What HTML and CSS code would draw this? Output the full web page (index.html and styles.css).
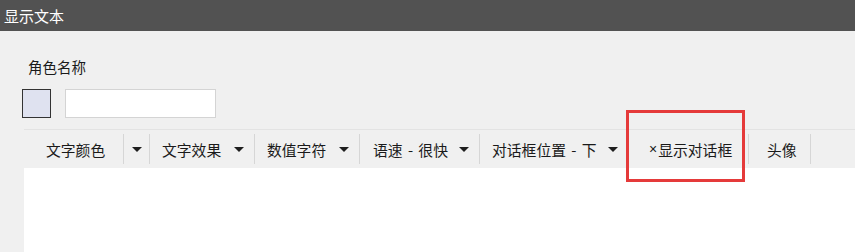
FILE: index.html
```html
<!DOCTYPE html>
<html lang="zh-CN">
<head>
<meta charset="utf-8">
<title>显示文本</title>
<link rel="stylesheet" href="styles.css">
</head>
<body>
<div class="titlebar">显示文本</div>
<div class="panel">
  <div class="label">角色名称</div>
  <div class="name-row">
    <div class="swatch"></div>
    <input class="name-input" type="text">
  </div>
  <div class="toolbar">
    <div class="btn b1">文字颜色</div>
    <div class="sep"></div>
    <div class="btn drop"><span class="arrow"></span></div>
    <div class="sep"></div>
    <div class="btn b2 w104">文字效果<span class="arrow"></span></div>
    <div class="sep"></div>
    <div class="btn b2 w104">数值字符<span class="arrow"></span></div>
    <div class="sep"></div>
    <div class="btn b2 w119">语速 - 很快<span class="arrow"></span></div>
    <div class="sep"></div>
    <div class="btn b2 w146">对话框位置 - 下<span class="arrow"></span></div>
    <div class="sep"></div>
    <div class="btn b6"><span class="times">×</span>显示对话框</div>
    <div class="sep"></div>
    <div class="btn b7">头像</div>
    <div class="sep"></div>
  </div>
  <div class="content"></div>
</div>
<div class="highlight"></div>
</body>
</html>
```
FILE: styles.css
```css
html, body {
  margin: 0;
  padding: 0;
}
body {
  width: 855px;
  height: 252px;
  overflow: hidden;
  background: #f0f0f0;
  font-family: "Noto Sans CJK SC", "Noto Sans", sans-serif;
  color: #1a1a1a;
  position: relative;
}
.titlebar {
  height: 31px;
  background: #525252;
  color: #fff;
  font-size: 15px;
  line-height: 31px;
  padding-left: 4px;
}
.panel {
  display: flex;
  flex-direction: column;
}
.label {
  margin: 26px 0 0 28px;
  font-size: 14.5px;
  line-height: 20px;
  height: 20px;
}
.name-row {
  display: flex;
  gap: 14px;
  margin: 12px 0 0 22px;
  height: 29px;
}
.swatch {
  width: 27px;
  height: 27px;
  border: 1px solid #333;
  background: #dfe2f0;
}
.name-input {
  box-sizing: border-box;
  width: 151px;
  height: 29px;
  margin: 0;
  border: 1px solid #d4d4d4;
  background: #fff;
  outline: none;
}
.toolbar {
  margin: 11px 0 0 24px;
  height: 38px;
  border-top: 1px solid #e3e3e3;
  display: flex;
  align-items: center;
  font-size: 14.8px;
  word-spacing: 2px;
}
.btn {
  display: flex;
  align-items: center;
  height: 38px;
  box-sizing: border-box;
  white-space: pre;
  flex-shrink: 0;
}
.b1 { padding: 0 0 0 22px; width: 99px; }
.drop { width: 25px; justify-content: center; }
.b2 { padding: 0 10px 0 12px; justify-content: space-between; }
.w104 { width: 104px; }
.w119 { width: 119px; padding-left: 13px; }
.w146 { width: 146px; padding-right: 8px; }
.b6 { padding: 0 0 0 22px; width: 121px; }
.b7 { padding: 0 0 0 18px; width: 61px; }
.times {
  font-family: "Liberation Sans", sans-serif;
  font-size: 14px;
  margin-right: 1px;
}
.sep {
  width: 1px;
  height: 30px;
  background: #d6d6d6;
  flex-shrink: 0;
}
.arrow {
  display: inline-block;
  width: 0;
  height: 0;
  border-left: 5px solid transparent;
  border-right: 5px solid transparent;
  border-top: 5px solid #1e1e1e;
}
.content {
  margin-left: 24px;
  height: 90px;
  background: #fff;
}
.highlight {
  position: absolute;
  left: 626px;
  top: 110px;
  width: 113px;
  height: 66px;
  border: 3px solid #e53a3a;
}
```
